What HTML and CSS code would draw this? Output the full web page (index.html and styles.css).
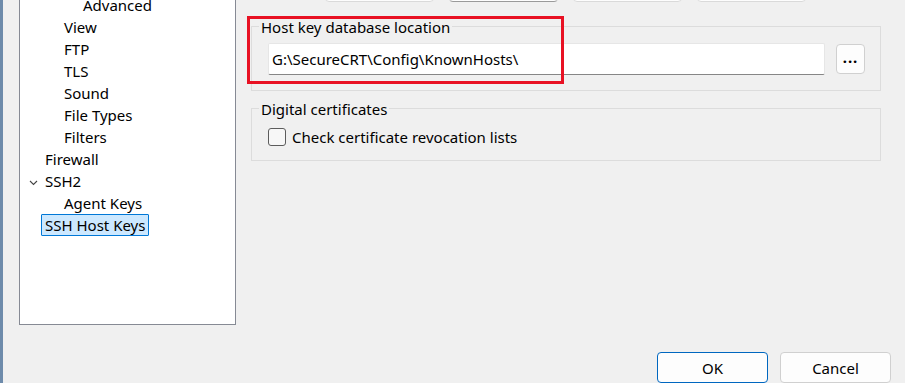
FILE: index.html
```html
<!DOCTYPE html>
<html lang="en">
<head>
  <meta charset="UTF-8">
  <title>Session Options - SSH Host Keys</title>
  <link rel="stylesheet" href="styles.css">
</head>
<body>
  <div class="dialog">
    <div class="main">
      <div class="tree">
        <ul>
          <li class="lvl3">Advanced</li>
          <li class="lvl2">View</li>
          <li class="lvl2">FTP</li>
          <li class="lvl2">TLS</li>
          <li class="lvl2">Sound</li>
          <li class="lvl2">File Types</li>
          <li class="lvl2">Filters</li>
          <li class="lvl1">Firewall</li>
          <li class="lvl1 open">
            <svg class="chev" width="9" height="6" viewBox="0 0 9 6"><path d="M1 1 L4.5 4.5 L8 1" fill="none" stroke="#444" stroke-width="1.1"/></svg>SSH2
          </li>
          <li class="lvl2">Agent Keys</li>
          <li class="lvl1"><span class="selected">SSH Host Keys</span></li>
        </ul>
      </div>

      <div class="content">
        <div class="tabs">
          <button class="tab"></button>
          <button class="tab focus"></button>
          <button class="tab"></button>
          <button class="tab"></button>
        </div>

        <fieldset class="group">
          <legend>Host key database location</legend>
          <div class="path-row">
            <input class="path" type="text" value="G:\SecureCRT\Config\KnownHosts\">
            <button class="browse">...</button>
          </div>
        </fieldset>

        <fieldset class="group certs">
          <legend>Digital certificates</legend>
          <label class="check"><span class="box"></span>Check certificate revocation lists</label>
        </fieldset>

        <div class="highlight"></div>
      </div>
    </div>

    <div class="footer">
      <button class="btn default">OK</button>
      <button class="btn">Cancel</button>
    </div>
  </div>
</body>
</html>
```

FILE: styles.css
```css
body {
  margin: 0;
  background: #f0f0f0;
  font-family: 'Noto Sans', 'Liberation Sans', sans-serif;
  font-size: 15px;
  color: #000;
  height: 383px;
  overflow: hidden;
}
.dialog {
  height: 383px;
  border-left: 3px solid #6e8bab;
  display: flex;
  flex-direction: column;
}
.main {
  display: flex;
  height: 325px;
}

/* tree */
.tree {
  margin-left: 16px;
  width: 217px;
  height: 325px;
  box-sizing: border-box;
  border: 1px solid #868a94;
  border-top: none;
  background: #fff;
  overflow: hidden;
}
.tree ul {
  list-style: none;
  margin: -6px 0 0;
  padding: 0;
}
.tree li {
  height: 22px;
  line-height: 22px;
  white-space: nowrap;
}
.lvl1 { padding-left: 25px; }
.lvl2 { padding-left: 44px; }
.lvl3 { padding-left: 63px; }
.lvl1.open {
  position: relative;
}
.chev {
  position: absolute;
  left: 9px;
  top: 10px;
}
.selected {
  display: inline-block;
  margin-left: -4px;
  padding: 0 3px;
  line-height: 20px;
  background: #cce8ff;
  border: 1px solid #0078d7;
  border-radius: 1px;
}

/* right side */
.content {
  position: relative;
  margin-left: 15px;
  width: 630px;
}
.tabs {
  display: flex;
  gap: 15px;
  padding-left: 74px;
  margin-top: -28px;
}
.tab {
  width: 109px;
  height: 30px;
  background: #fdfdfd;
  border: 1px solid #dadada;
  border-radius: 4px;
}
.tab.focus {
  border-color: #c8c8c8;
  border-bottom-color: #9a9a9a;
}
.group {
  margin: 13px 0 0;
  padding: 6px 15px 15px 16px;
  border: 1px solid #dcdcdc;
}
.group legend {
  margin-left: -9px;
  padding: 2px 2px 0;
  line-height: 20px;
}
.path-row {
  display: flex;
  align-items: center;
  gap: 11px;
}
.path {
  flex: 1;
  height: 32px;
  box-sizing: border-box;
  margin: 0;
  padding: 0 3px;
  font: inherit;
  color: #000;
  background: #fff;
  border: 1px solid #e6e6e6;
  border-bottom-color: #868686;
  border-radius: 2px;
  outline: none;
}
.browse {
  width: 29px;
  height: 30px;
  padding: 0 0 4px;
  font: inherit;
  font-weight: bold;
  letter-spacing: 1px;
  background: #fdfdfd;
  border: 1px solid #d0d0d0;
  border-radius: 4px;
}
.certs {
  margin-top: 6px;
  padding-top: 7px;
  padding-bottom: 12px;
}
.check {
  display: flex;
  align-items: center;
  gap: 6px;
  height: 22px;
}
.box {
  width: 18px;
  height: 18px;
  box-sizing: border-box;
  border: 1px solid #5c5c5c;
  border-radius: 3px;
  background: #f7f7f7;
}
.highlight {
  position: absolute;
  left: -4px;
  top: 16px;
  width: 317px;
  height: 68px;
  box-sizing: border-box;
  border: 3px solid #e81123;
}

/* footer */
.footer {
  display: flex;
  justify-content: flex-end;
  gap: 12px;
  padding-right: 14px;
  margin-top: 27px;
}
.btn {
  width: 111px;
  height: 31px;
  font: inherit;
  background: #fdfdfd;
  border: 1px solid #d0d0d0;
  border-radius: 4px;
}
.btn.default {
  border-color: #0067c0;
}
```
